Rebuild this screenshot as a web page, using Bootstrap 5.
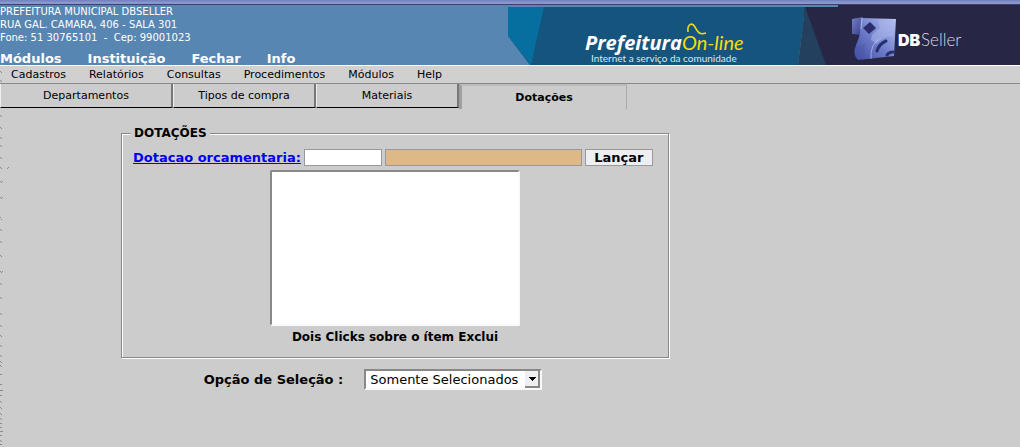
<!DOCTYPE html>
<html lang="pt-BR">
<head>
<meta charset="utf-8">
<meta name="viewport" content="width=device-width, initial-scale=1">
<title>Dotações</title>
<link href="https://cdn.jsdelivr.net/npm/bootstrap@5.3.0/dist/css/bootstrap.min.css" rel="stylesheet">
<style>
body { background: #ccc; color: #000; font: 11px/14px "DejaVu Sans", sans-serif; }
.app-title { height: 5px; background: linear-gradient(#6f7fc0, #8f9bcb 60%, #8b97c9 75%, #413f72 80%); }
.app-head { background: #5786b2; height: 60px; }
.app-org { font-size: 10px; line-height: 13px; }
.app-main { font-size: 13px; line-height: 13px; font-weight: 700; gap: 26px; }
.app-main a { color: #fff; }
.app-banner { width: 512px; height: 60px; }
.app-menu { background: #d0d0d0; height: 19px; gap: 23px; border-top: 1px solid #fff; border-bottom: 1px solid #888; padding-left: 11px; }
.app-menu a, .app-tabs button { color: #000; }
.app-tabs button { background: #ccc; border: 1px solid #eee; border-width: 0 2px 1px 1px; border-right-color: #777; border-bottom-color: #000; height: 24px; width: 143px; border-radius: 0; }
.app-tabs .tab-wide { width: 173px; }
.app-tabs .tab-current { width: 168px; height: 25px; font-weight: 700; border: 0 solid #aaa; border-top: 2px solid #bbb; border-left: 3px solid #a0a0a0; border-right-width: 1px; }
.work { max-width: 790px; padding-top: 13px; font-size: 13px; line-height: 15px; font-weight: 700; }
.frame { width: 548px; border: 1px solid #888; box-shadow: 1px 1px #fff, inset 1px 1px #fff; padding: 0 11px 12px; }
.frame legend { font-size: 12px; line-height: 15px; padding: 0 3px; margin: -8px 0 7px -2px; background: #ccc; }
.frame .entry-row { gap: 3px; height: 18px; }
.frame a { color: #00e; }
.entry { border: 1px solid #999; height: 17px; border-radius: 0; padding: 0 2px; background: #fff; }
.entry-code { width: 78px; }
.entry-name { width: 197px; background: #deb887; }
.entry-go { width: 68px; background: #eeeef3; font-size: 13px; line-height: 15px; font-weight: 700; color: #000; }
.pick-list { width: 250px; height: 156px; border: 2px solid #fafafa; border-top-color: #888; border-left-color: #888; background: #fff; }
.pick-note { font-size: 12px; }
.choice { gap: 21px; padding-right: 44px; margin-top: 11px; }
.choice select { appearance: none; width: 178px; height: 21px; border: 2px solid #fafafa; border-top-color: #888; border-left-color: #888; border-radius: 0; padding: 0 4px; font-size: 13px; line-height: 17px; color: #000;
 background: #fff url("data:image/svg+xml,%3Csvg xmlns='http://www.w3.org/2000/svg' width='15' height='17' shape-rendering='crispEdges'%3E%3Cpath fill='%23888' d='M0 0h15v17H0z'/%3E%3Cpath fill='%23eeeef3' d='M0 0h13v15H0z'/%3E%3Cpath d='M4 6h7v1h-1v1H9v1H8v1H7V9H6V8H5V7H4z'/%3E%3C/svg%3E") no-repeat right 0 top 0; }
.specks { left: 0; top: 66px; }
</style>
<script src="https://cdn.jsdelivr.net/npm/bootstrap@5.3.0/dist/js/bootstrap.bundle.min.js"></script>
</head>
<body>
<div class="app-title"></div>
<header class="app-head d-flex justify-content-between">
  <div class="d-flex flex-column justify-content-between text-white text-nowrap">
    <div class="app-org">PREFEITURA MUNICIPAL DBSELLER<br>RUA GAL. CAMARA, 406 - SALA 301<br>Fone: 51 30765101 &nbsp;-&nbsp; Cep: 99001023</div>
    <nav class="app-main d-flex">
      <a class="text-decoration-none" href="#">Módulos</a>
      <a class="text-decoration-none" href="#">Instituição</a>
      <a class="text-decoration-none" href="#">Fechar</a>
      <a class="text-decoration-none" href="#">Info</a>
    </nav>
  </div>
  <svg class="app-banner flex-shrink-0" viewBox="0 0 512 60" role="img" aria-label="Prefeitura On-line, DBSeller">
    <defs>
      <linearGradient id="cube" x1="0" y1="1" x2="1" y2="0"><stop offset="0" stop-color="#3f4aa0"/><stop offset=".5" stop-color="#7080cc"/><stop offset="1" stop-color="#bac6f2"/></linearGradient>
      <linearGradient id="face" x1="0" y1="0" x2="1" y2="1"><stop offset="0" stop-color="#7480c8"/><stop offset="1" stop-color="#343b83"/></linearGradient>
    </defs>
    <path fill="#272645" d="M296 2H330V0H512V60H296z"/>
    <path fill="#14547d" d="M0 2H297L290 60H22L0 31z"/>
    <path fill="#076f9f" d="M0 2H36L23 60L0 31z"/>
    <path fill="#23405f" d="M297 2L318 60H290z"/>
    <g font-style="italic">
      <text x="77" y="45" fill="#fff" font-family="Open Sans" font-weight="700" font-size="20">Prefeitura</text>
      <text x="174" y="45" fill="#f3df08" font-family="Lato" font-size="20">On-line</text>
    </g>
    <path fill="none" stroke="#f3df08" stroke-width="1.6" d="M180 27C179 19 184 17 187 22C190 28 192 30 198 28"/>
    <text x="83" y="57" fill="#d9e9f4" font-family="Lato" font-size="10">Internet a serviço da comunidade</text>
    <path fill="url(#face)" d="M344 14L355 12L353 30L344 29z"/>
    <path fill="url(#cube)" d="M353 13L388 14L386 51L350 55Q344 50 348 40Q352 31 352 27z"/>
    <path fill="#2b2c6c" d="M362 17L368 23L361 29L355 23z"/>
    <path fill="#aab7ea" opacity=".55" d="M370 16L386 15L385 31Q375 31 369 39L363 35Q362 30 372 23z"/>
    <path fill="#4b58ac" opacity=".5" d="M348 42L357 39L355 53L349 54z"/>
    <path fill="none" stroke="#27306e" stroke-width="3" stroke-linecap="round" d="M378 36Q371 39 369 46M385 47Q381 47 379 50"/>
    <path fill="none" stroke="#b9c5ef" stroke-width="1" opacity=".7" d="M354 13L353 24M363 54Q362 40 371 34"/>
    <text x="390" y="41" fill="#fff" font-family="Inter" font-weight="900" font-size="16">DB</text>
    <text x="413" y="41" fill="#d8d8e5" font-family="Lato" font-weight="300" font-size="17">Seller</text>
  </svg>
</header>
<nav class="app-menu d-flex align-items-center">
  <a class="text-decoration-none" href="#">Cadastros</a>
  <a class="text-decoration-none" href="#">Relatórios</a>
  <a class="text-decoration-none" href="#">Consultas</a>
  <a class="text-decoration-none" href="#">Procedimentos</a>
  <a class="text-decoration-none" href="#">Módulos</a>
  <a class="text-decoration-none" href="#">Help</a>
</nav>
<div class="app-tabs d-flex align-items-start">
  <button type="button" class="tab-wide">Departamentos</button>
  <button type="button">Tipos de compra</button>
  <button type="button">Materiais</button>
  <button type="button" class="tab-current">Dotações</button>
</div>
<main class="work d-flex flex-column align-items-center">
  <fieldset class="frame mt-1">
    <legend class="float-none w-auto d-table fw-bold">DOTAÇÕES</legend>
    <div class="entry-row d-flex align-items-center">
      <label for="code"><a href="#">Dotacao orcamentaria:</a></label>
      <input class="entry entry-code" id="code" type="text">
      <input class="entry entry-name" type="text" aria-label="Descrição" readonly>
      <button class="entry entry-go" type="button">Lançar</button>
    </div>
    <div class="d-flex flex-column align-items-center">
      <select class="pick-list mt-1" size="8" id="items"></select>
      <label class="pick-note mt-1" for="items">Dois Clicks sobre o ítem Exclui</label>
    </div>
  </fieldset>
  <div class="choice d-flex align-items-center">
    <label for="option">Opção de Seleção :</label>
    <select id="option"><option>Somente Selecionados</option></select>
  </div>
</main>
<svg class="specks position-absolute" width="9" height="381" aria-hidden="true" shape-rendering="crispEdges">
  <path fill="none" stroke="#8c8c8c" d="M0 5.500h1m0 1h1M0 14.500h1m0 1h1M0 49.500h1m0 1h1M0 61.500h1m0 1h1M0 71.500h1m0 1h1M0 79.500h1m0 1h1M0 91.500h1m0 1h1M0 101.500h1m0 1h1M7 102.500h1m0-1h1M0 115.500h1m0 1h1m0-1h1M0 131.500h1m0 1h1m0-1h1M0 151.500h1m0 2h1M0 163.500h1m0 1h1M0 175.500h1m0 1h1M0 189.500h1m0 1h1M0 205.500h1m0 1h1m0-1h1M0 217.500h1m0 1h1M0 231.500h1m0 1h1M0 247.500h1m0 1h1M0 259.500h1m0 1h1M0 269.500h1m0 1h1M0 279.500h1m0 1h1M0 289.500h1m0 1h1M0 295.500h1m0 1h1M0 299.500h1m0 1h1M0 308.500h2M0 318.500h2M0 324.500h3M0 329.500h2M0 335.500h1m0 1h1M0 341.500h1m0 1h1M0 347.500h1m0 1h1M0 352.500h1m0 1h1M0 357.500h2M0 361.500h2M0 365.500h3M0 369.500h2M0 374.500h1m0 1h1M0 378.500h2"/>
</svg>
</body>
</html>
